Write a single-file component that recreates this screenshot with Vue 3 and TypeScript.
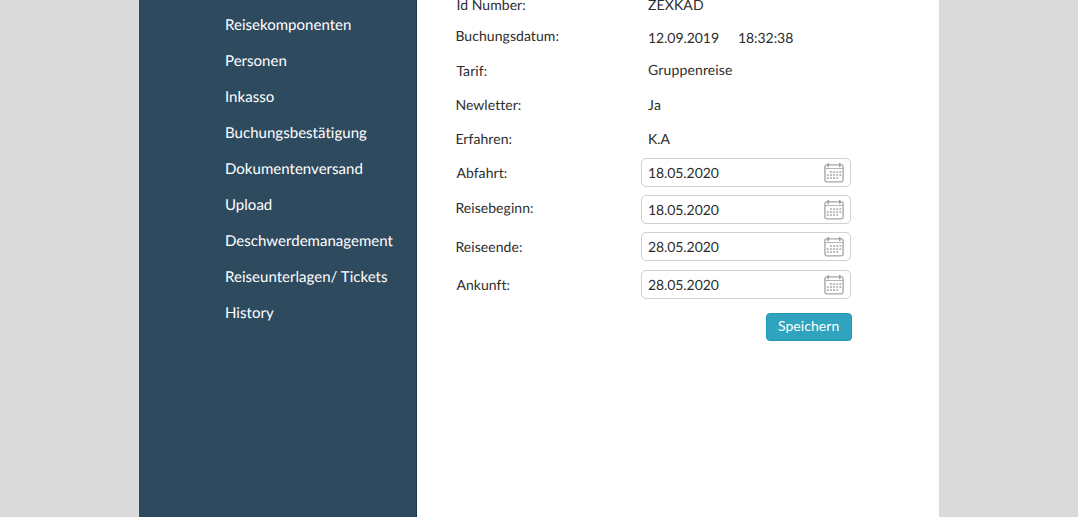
<script setup lang="ts">
interface Field {
  id: string
  label: string
  value: string
}

const menu: string[] = [
  'Reisekomponenten',
  'Personen',
  'Inkasso',
  'Buchungsbestätigung',
  'Dokumentenversand',
  'Upload',
  'Deschwerdemanagement',
  'Reiseunterlagen/ Tickets',
  'History',
]

const details: Field[] = [
  { id: 'number', label: 'Id Number:', value: 'ZEXKAD' },
  { id: 'booked', label: 'Buchungsdatum:', value: '12.09.2019' },
  { id: 'tariff', label: 'Tarif:', value: 'Gruppenreise' },
  { id: 'news', label: 'Newletter:', value: 'Ja' },
  { id: 'source', label: 'Erfahren:', value: 'K.A' },
]

const dates: Field[] = [
  { id: 'departure', label: 'Abfahrt:', value: '18.05.2020' },
  { id: 'start', label: 'Reisebeginn:', value: '18.05.2020' },
  { id: 'end', label: 'Reiseende:', value: '28.05.2020' },
  { id: 'arrival', label: 'Ankunft:', value: '28.05.2020' },
]

const bookedTime = '18:32:38'
const dots: { x: number; y: number }[] = []
for (let row = 0; row < 3; row++) {
  for (let col = row === 0 ? 1 : 0; col < (row === 2 ? 4 : 5); col++) {
    dots.push({ x: 2.8 + col * 3.15, y: 8.2 + row * 3 })
  }
}
</script>

<template>
  <div class="page">
    <nav class="sidebar">
      <a v-for="item in menu" :key="item" class="item">{{ item }}</a>
    </nav>
    <main class="content">
      <div class="labels">
        <div v-for="f in [...details, ...dates]" :key="f.id" class="text" :class="`l-${f.id}`">{{ f.label }}</div>
      </div>
      <div class="values">
        <div v-for="f in details" :key="f.id" class="text" :class="`v-${f.id}`">
          <span>{{ f.value }}</span><span v-if="f.id === 'booked'" class="time">{{ bookedTime }}</span>
        </div>
        <div v-for="f in dates" :key="f.id" class="input" :class="`v-${f.id}`">
          <span class="date">{{ f.value }}</span>
          <svg class="calendar" width="20" height="20" viewBox="0 0 20 20">
            <rect x="0.9" y="1.9" width="18.2" height="16.9" rx="1.8" fill="none" stroke="#a5a5a5" stroke-width="1.3" />
            <path d="M1 5.5H19" stroke="#b4b4b4" stroke-width="1" />
            <path d="M4.2 0.7V3.6M15.8 0.7V3.6" stroke="#999" stroke-width="1.5" stroke-linecap="round" />
            <rect v-for="(d, i) in dots" :key="i" :x="d.x" :y="d.y" width="1.9" height="1.7" fill="#b0b0b0" />
          </svg>
        </div>
        <button class="save">Speichern</button>
      </div>
    </main>
  </div>
</template>

<style>
body {
  margin: 0;
  background: #dadada;
}
</style>

<style scoped>
.page {
  display: flex;
  width: 800px;
  height: 517px;
  margin: 0 auto;
  overflow: hidden;
  background: #fff;
  font-family: Lato, "Liberation Sans", sans-serif;
  font-variant-ligatures: none;
  text-rendering: geometricPrecision;
}
.sidebar {
  box-sizing: border-box;
  flex: none;
  width: 278.4px;
  padding: 7px 0 0 86px;
  background: #2e4a5f;
  border-right: 1px solid #16364e;
}
.item {
  display: block;
  height: 36px;
  line-height: 36px;
  font-size: 15px;
  letter-spacing: 0.03px;
  color: #fff;
  white-space: nowrap;
}
.content {
  display: flex;
  color: #2d2d2d;
  font-size: 14px;
}
.labels {
  width: 185.6px;
  padding-left: 38px;
  letter-spacing: 0.06px;
}
.values {
  width: 210.6px;
}
.text {
  height: 20px;
  line-height: 20px;
  white-space: nowrap;
}
.values .text {
  padding-left: 7px;
}
.time {
  margin-left: 19px;
}
.l-number { margin: -5px 0 0 1px; }
.l-booked { margin-top: 11px; }
.l-tariff { margin: 15px 0 0 1px; }
.l-news { margin-top: 14px; }
.l-source { margin-top: 13.5px; }
.l-departure { margin: 14.5px 0 0 1px; }
.l-start { margin-top: 15px; }
.l-end { margin-top: 19px; }
.l-arrival { margin: 18px 0 0 1px; }
.v-number { margin-top: -5px; letter-spacing: 0.12px; }
.v-booked { margin-top: 13px; letter-spacing: -0.06px; }
.v-tariff { margin-top: 12px; letter-spacing: 0.14px; }
.v-news { margin-top: 15px; letter-spacing: 0.3px; }
.v-source { margin-top: 14px; }
.input {
  box-sizing: border-box;
  display: flex;
  align-items: center;
  justify-content: space-between;
  width: 210px;
  height: 29px;
  padding: 0 6px;
  border: 1px solid #d0d0d0;
  border-radius: 5px;
}
.date {
  letter-spacing: -0.08px;
}
.v-departure { margin-top: 9px; }
.v-start { margin-top: 8px; }
.v-end { margin-top: 8px; }
.v-arrival { margin-top: 9px; }
.calendar {
  display: block;
}
.save {
  display: block;
  width: 86px;
  height: 28px;
  margin: 14px 0 0 auto;
  padding: 0 0 3px;
  border: 1px solid #1f97b5;
  border-radius: 4px;
  background: #30a3be;
  color: #fff;
  font: inherit;
  letter-spacing: 0.06px;
}
</style>
